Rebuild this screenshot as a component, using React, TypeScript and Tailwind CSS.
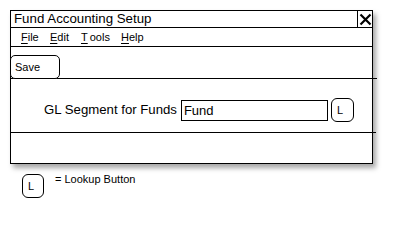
import React from 'react';

const menuItems = [
  { first: 'F', rest: 'ile', width: 'w-[29px]' },
  { first: 'E', rest: 'dit', width: 'w-[31px]' },
  { first: 'T', rest: 'ools', width: 'w-[40px]', gap: true },
  { first: 'H', rest: 'elp', width: 'w-[30px]' },
];

const LookupButton: React.FC<{ className?: string }> = ({ className = '' }) => (
  <div className={`border border-black rounded-[6px] bg-white text-[11px] leading-none flex items-center pl-[5px] ${className}`}>
    L
  </div>
);

const App: React.FC = () => {
  return (
    <div className="w-[415px] h-[240px] bg-white text-black pt-[10px] pl-[10px] font-['Liberation_Sans',Arial,sans-serif]">
      {/* window */}
      <div className="w-[363px] h-[154px] border border-black bg-white flex flex-col shadow-[3px_4px_5px_rgba(0,0,0,0.35)]">
        {/* title bar */}
        <div className="h-[17px] border-b border-black flex items-center">
          <span className="flex-1 pl-[3px] text-[13.3px] leading-none">Fund Accounting Setup</span>
          <div className="w-[15px] h-full border-l border-black flex items-center justify-center">
            <svg width="13" height="13" viewBox="0 0 13 13">
              <path d="M1.5 1.5 L11.5 11.5 M11.5 1.5 L1.5 11.5" stroke="black" strokeWidth="2.2" />
            </svg>
          </div>
        </div>

        {/* menu */}
        <div className="h-[19px] border-b border-black flex items-center pl-[10px] text-[11px] leading-none">
          {menuItems.map((m) => (
            <span key={m.first} className={m.width}>
              <span className="underline underline-offset-[2px]">{m.first}</span>
              {m.gap && <span className="inline-block w-[2px]" />}
              {m.rest}
            </span>
          ))}
        </div>

        {/* toolbar */}
        <div className="h-[31px] flex items-end">
          <button className="relative -ml-px -mb-px w-[50px] h-[24px] border border-black rounded-[5px] bg-white text-[11px] text-left pl-[4px] leading-none">
            Save
          </button>
        </div>
        <div className="h-px bg-black -mr-[5px]" />

        {/* form */}
        <div className="h-[53px] pl-[33px] pt-[19px]">
          <div className="flex items-center h-[24px]">
            <span className="text-[13.2px] leading-none mr-[4px]">GL Segment for Funds</span>
            <div className="w-[147px] h-[21px] border border-black flex items-center pl-[2px] text-[13px] leading-none">
              Fund
            </div>
            <LookupButton className="ml-[3px] w-[23px] h-[24px]" />
          </div>
        </div>
        <div className="h-px bg-black -mr-[4px]" />

        <div className="flex-1" />
      </div>

      {/* legend */}
      <div className="mt-[10px] ml-[12px] flex items-start">
        <LookupButton className="w-[22px] h-[24px]" />
        <span className="ml-[11px] -mt-px text-[11px] leading-[13px]">= Lookup Button</span>
      </div>
    </div>
  );
};

export default App;
